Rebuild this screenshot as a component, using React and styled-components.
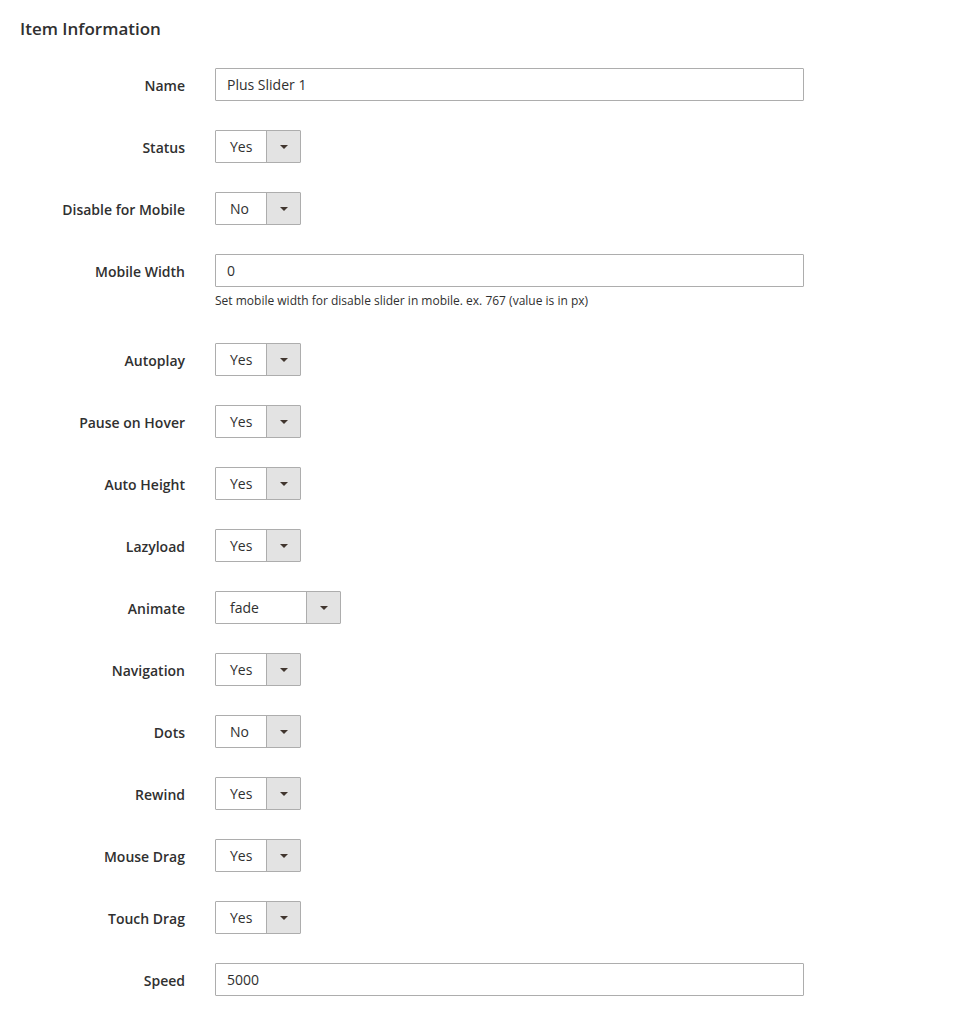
import styled, { createGlobalStyle } from "styled-components";

const GlobalStyle = createGlobalStyle`
   body {
      margin: 0;
      background: #ffffff;
      font-family: "Open Sans", "Liberation Sans", sans-serif;
      color: #303030;
   }
`;

const fields = [
   { label: "Name", type: "text", value: "Plus Slider 1" },
   { label: "Status", type: "select", value: "Yes" },
   { label: "Disable for Mobile", type: "select", value: "No" },
   {
      label: "Mobile Width",
      type: "text",
      value: "0",
      note: "Set mobile width for disable slider in mobile. ex. 767 (value is in px)",
   },
   { label: "Autoplay", type: "select", value: "Yes" },
   { label: "Pause on Hover", type: "select", value: "Yes" },
   { label: "Auto Height", type: "select", value: "Yes" },
   { label: "Lazyload", type: "select", value: "Yes" },
   { label: "Animate", type: "select", value: "fade", wide: true },
   { label: "Navigation", type: "select", value: "Yes" },
   { label: "Dots", type: "select", value: "No" },
   { label: "Rewind", type: "select", value: "Yes" },
   { label: "Mouse Drag", type: "select", value: "Yes" },
   { label: "Touch Drag", type: "select", value: "Yes" },
   { label: "Speed", type: "text", value: "5000" },
];

const App = () => {
   return (
      <Page>
         <GlobalStyle />
         <Title>Item Information</Title>
         <Form>
            {fields.map((f) => (
               <Row key={f.label}>
                  <Label>{f.label}</Label>
                  <Control>
                     {f.type === "text" ? (
                        <TextInput>{f.value}</TextInput>
                     ) : (
                        <Select $wide={f.wide}>
                           <SelectValue>{f.value}</SelectValue>
                           <SelectArrow>
                              <Caret />
                           </SelectArrow>
                        </Select>
                     )}
                     {f.note && <Note>{f.note}</Note>}
                  </Control>
               </Row>
            ))}
         </Form>
      </Page>
   );
};

const Page = styled.div`
   padding: 18px 0 20px 20px;
`;

const Title = styled.div`
   font-size: 17px;
   font-weight: 600;
   line-height: 22px;
   color: #303030;
`;

const Form = styled.div`
   display: flex;
   flex-direction: column;
   gap: 29px;
   margin-top: 28px;
`;

const Row = styled.div`
   display: grid;
   grid-template-columns: 165px 589px;
   column-gap: 30px;
   align-items: start;
`;

const Label = styled.div`
   box-sizing: border-box;
   height: 33px;
   padding-top: 2px;
   text-align: right;
   font-size: 14px;
   font-weight: 600;
   line-height: 31px;
   color: #303030;
`;

const Control = styled.div`
   display: flex;
   flex-direction: column;
   align-items: flex-start;
`;

const TextInput = styled.div`
   box-sizing: border-box;
   width: 589px;
   height: 33px;
   border: 1px solid #adadad;
   border-radius: 1px;
   padding: 0 11px;
   font-size: 14px;
   line-height: 31px;
   color: #303030;
   background: #ffffff;
`;

const Select = styled.div`
   box-sizing: border-box;
   display: flex;
   width: ${(p) => (p.$wide ? "126px" : "86px")};
   height: 33px;
   border: 1px solid #adadad;
   border-radius: 1px;
   background: #ffffff;
`;

const SelectValue = styled.div`
   flex: 1;
   padding-left: 14px;
   font-size: 14px;
   line-height: 31px;
   color: #303030;
`;

const SelectArrow = styled.div`
   width: 33px;
   display: flex;
   align-items: center;
   justify-content: center;
   background: #e3e3e3;
   border-left: 1px solid #adadad;
`;

const Caret = styled.span`
   width: 0;
   height: 0;
   border-left: 4px solid transparent;
   border-right: 4px solid transparent;
   border-top: 4px solid #41362f;
   margin-left: 1px;
`;

const Note = styled.div`
   margin: 5px 0 4px;
   font-size: 12px;
   line-height: 18px;
   color: #303030;
`;

export default App;
